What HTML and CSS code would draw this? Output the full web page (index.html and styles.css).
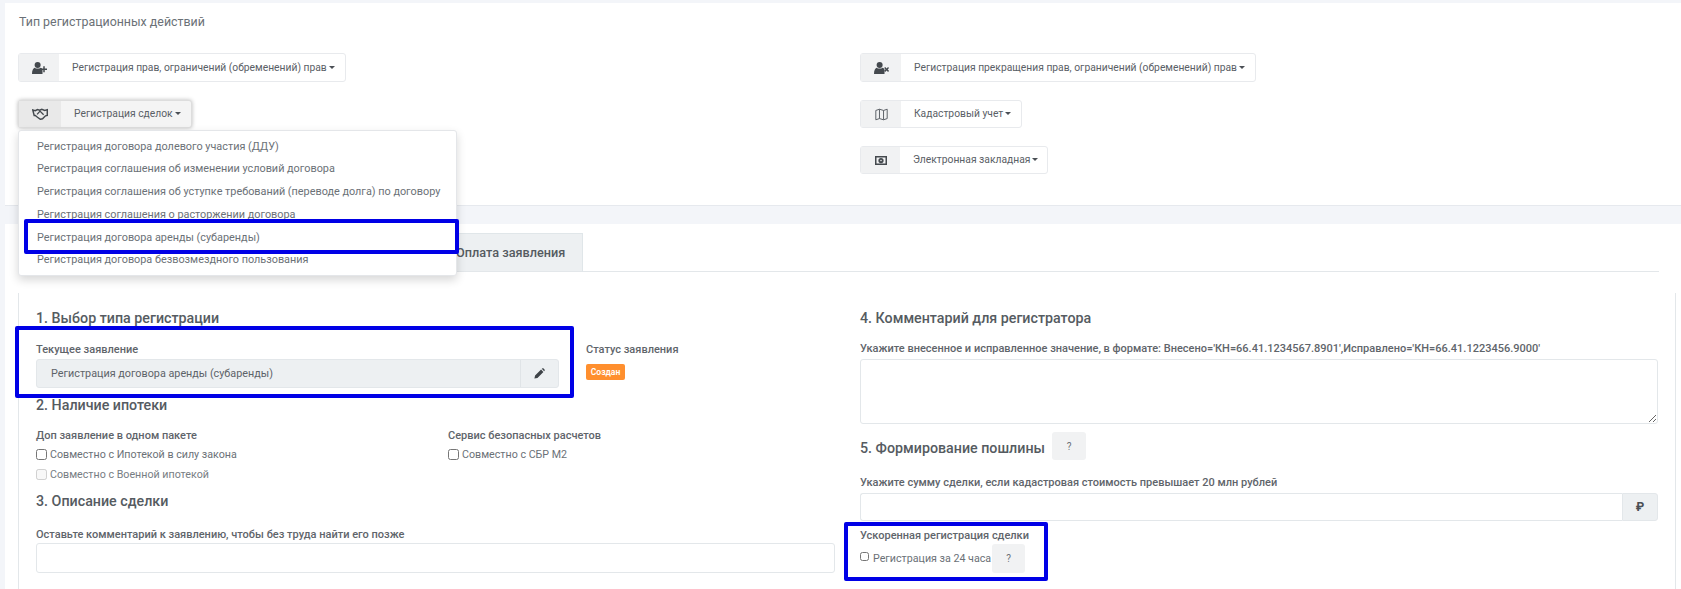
FILE: index.html
```html
<!DOCTYPE html>
<html lang="ru">
<head>
<meta charset="utf-8">
<title>Тип регистрационных действий</title>
<link rel="stylesheet" href="styles.css">
</head>
<body>
<section class="card card-top">
  <h2 class="card-title">Тип регистрационных действий</h2>
  <div class="actions">
    <div class="action-col">
      <div class="split w-rights">
        <span class="split-icon"><svg viewBox="0 0 20 16" class="ico"><circle cx="7.500" cy="4" r="4"/><path d="M0 16c0-5 1.500-8 3.500-8.500 1.500 1.500 6.500 1.500 8 0 1 .2 2 1 2.500 2.500v6z"/><path d="M15 5.500h2v3h3v2h-3v3h-2v-3h-3v-2h3z"/></svg></span>
        <span class="split-label">Регистрация прав, ограничений (обременений) прав<i class="caret"></i></span>
      </div>
      <div class="menu-wrap">
        <div class="split split-open w-deals">
          <span class="split-icon"><svg viewBox="0 0 22 16" class="ico ico-wide"><path d="M1 2.500l3.500 1 3-1.500 3 .8 3-1.300 4 1.500 3.500-1v8l-2.500.5-4 4-3 .8-4-2.800-3-2.500-1.500 0z" fill="none" stroke="#44494e" stroke-width="2"/><path d="M7 8.500l4-4.500 5 5" fill="none" stroke="#44494e" stroke-width="1.800"/></svg></span>
          <span class="split-label">Регистрация сделок<i class="caret"></i></span>
        </div>
        <ul class="menu">
          <li>Регистрация договора долевого участия (ДДУ)</li>
          <li>Регистрация соглашения об изменении условий договора</li>
          <li>Регистрация соглашения об уступке требований (переводе долга) по договору</li>
          <li>Регистрация соглашения о расторжении договора</li>
          <li>Регистрация договора аренды (субаренды)</li>
          <li>Регистрация договора безвозмездного пользования</li>
          <li class="mark mark-menu" aria-hidden="true"></li>
        </ul>
      </div>
    </div>
    <div class="action-col">
      <div class="split w-stop">
        <span class="split-icon"><svg viewBox="0 0 20 16" class="ico"><circle cx="7.500" cy="4" r="4"/><path d="M0 16c0-5 1.500-8 3.500-8.500 1.500 1.500 6.500 1.500 8 0 1 .2 2 1 2.500 2.500v6z"/><path d="M13.500 8l1.400-1.400 1.900 1.900 1.900-1.900L20.100 8l-1.900 1.900 1.900 1.900-1.400 1.400-1.900-1.900-1.900 1.900-1.400-1.400 1.900-1.900z"/></svg></span>
        <span class="split-label">Регистрация прекращения прав, ограничений (обременений) прав<i class="caret"></i></span>
      </div>
      <div class="split split-short w-cad">
        <span class="split-icon"><svg viewBox="0 0 16 15" class="ico ico-line"><path d="M1 2.500l4.500-1.500 5 1.500L15 1v11.500L10.500 14l-5-1.500L1 14zM5.500 1v11.500M10.500 2.500V14"/></svg></span>
        <span class="split-label">Кадастровый учет<i class="caret"></i></span>
      </div>
      <div class="split split-short split-narrow w-mort">
        <span class="split-icon"><svg viewBox="0 0 16 12" class="ico ico-money"><path fill-rule="evenodd" d="M0 0h16v12H0zM2 2v8h12V2z"/><path fill-rule="evenodd" d="M8 2.500a3.500 3.500 0 1 0 0 7 3.500 3.500 0 1 0 0-7zM8 5a1 1 0 1 1 0 2 1 1 0 1 1 0-2z"/></svg></span>
        <span class="split-label">Электронная закладная<i class="caret"></i></span>
      </div>
    </div>
  </div>
</section>

<section class="card card-main">
  <div class="tabs"><span class="tab">Оплата заявления</span></div>
  <div class="panel">
    <div class="col">
      <h3 class="h-sec">1. Выбор типа регистрации</h3>
      <div class="current-row">
        <div class="current">
          <div class="lbl">Текущее заявление</div>
          <div class="current-field">
            <span class="current-text">Регистрация договора аренды (субаренды)</span>
            <span class="current-btn"><svg viewBox="0 0 14 14" class="pencil"><path d="M0.500 13.500l.9-3.900L9 2l3 3-7.600 7.600zM9.900 1.100l.5-.5c.6-.5 1.300-.5 1.800 0l1.200 1.200c.5.500.5 1.200 0 1.800l-.5.5z"/></svg></span>
          </div>
          <div class="mark mark-current" aria-hidden="true"></div>
        </div>
        <div class="status">
          <div class="lbl">Статус заявления</div>
          <span class="badge">Создан</span>
        </div>
      </div>
      <h3 class="h-sec h-two">2. Наличие ипотеки</h3>
      <div class="mort-grid">
        <div>
          <div class="lbl">Доп заявление в одном пакете</div>
          <label class="chk"><input type="checkbox">Совместно с Ипотекой в силу закона</label>
          <label class="chk chk-off"><input type="checkbox" disabled>Совместно с Военной ипотекой</label>
        </div>
        <div>
          <div class="lbl">Сервис безопасных расчетов</div>
          <label class="chk"><input type="checkbox">Совместно с СБР М2</label>
        </div>
      </div>
      <h3 class="h-sec h-three">3. Описание сделки</h3>
      <div class="lbl lbl-desc">Оставьте комментарий к заявлению, чтобы без труда найти его позже</div>
      <input class="field field-desc" type="text">
    </div>
    <div class="col">
      <h3 class="h-sec">4. Комментарий для регистратора</h3>
      <div class="lbl lbl-note">Укажите внесенное и исправленное значение, в формате: Внесено='КН=66.41.1234567.8901',Исправлено='КН=66.41.1223456.9000'</div>
      <textarea class="field field-area"></textarea>
      <div class="fee-head">
        <h3 class="h-sec h-fee">5. Формирование пошлины</h3>
        <span class="help help-lg">?</span>
      </div>
      <div class="lbl lbl-sum">Укажите сумму сделки, если кадастровая стоимость превышает 20 млн рублей</div>
      <div class="sum-row">
        <input class="sum-input" type="text">
        <span class="sum-addon">₽</span>
      </div>
      <div class="fast">
        <div class="lbl">Ускоренная регистрация сделки</div>
        <div class="fast-row">
          <label class="chk chk-fast"><input type="checkbox">Регистрация за 24 часа</label>
          <span class="help help-sm">?</span>
        </div>
        <div class="mark mark-fast" aria-hidden="true"></div>
      </div>
    </div>
  </div>
</section>
</body>
</html>
```
FILE: styles.css
```css
* { box-sizing: border-box; }
html, body { margin: 0; height: 589px; overflow: hidden; }
body {
  background: #f3f5f9;
  font-family: Roboto, "Noto Sans", sans-serif;
  font-size: 11.5px;
  color: #5d6369;
  padding: 3px 0 0 5px;
}
.card { background: #fff; }
.card-top {
  height: 203px;
  padding: 9px 0 0 13px;
  border-bottom: 1px solid #e6e9ee;
}
.card-title { margin: 0 0 0 1px; font-size: 12.4px; line-height: 20px; font-weight: 400; color: #6b7177; }
.actions { display: grid; grid-template-columns: 842px 1fr; margin-top: 21px; }
.action-col { display: flex; flex-direction: column; align-items: flex-start; gap: 18px; }
.split {
  display: flex;
  height: 29px;
  border: 1px solid #e8eaed;
  border-radius: 3px;
  background: #fff;
}
.split-short { height: 28px; }
.split-icon {
  flex: none;
  width: 40px;
  background: #f1f2f3;
  display: flex;
  align-items: center;
  justify-content: center;
}
.split-narrow .split-icon { width: 39px; }
.split-label {
  flex: 1;
  padding-left: 13px;
  line-height: 27px;
  font-size: 10.3px;
  color: #5a6066;
  white-space: nowrap;
}
.split-short .split-label { line-height: 26px; }
.w-rights { width: 328px; }
.w-deals { width: 174px; }
.w-stop { width: 396px; }
.w-cad { width: 162px; }
.w-mort { width: 188px; }
.split-open { box-shadow: 0 0 4px rgba(0,0,0,.28); height: 28px; background: #f4f4f4; border-color: #ddd; }
.split-open .split-icon { background: #e9e9e9; width: 42px; }
.split-open .split-label { line-height: 26px; }
.caret {
  display: inline-block;
  margin-left: 2px;
  vertical-align: 2px;
  border-top: 3px solid #4a4f55;
  border-left: 3px solid transparent;
  border-right: 3px solid transparent;
}
.ico { width: 15px; height: 12px; fill: #44494e; }
.ico-wide { width: 16px; height: 12px; }
.ico-line { fill: none; stroke: #5a6066; stroke-width: 1.200; width: 13px; height: 13px; }
.ico-money { width: 12px; height: 9px; }
.menu-wrap { position: relative; }
.menu {
  position: absolute;
  z-index: 5;
  top: 30px;
  left: 0;
  width: 439px;
  height: 146px;
  margin: 0;
  padding: 4.5px 0 0;
  list-style: none;
  background: #fff;
  border: 1px solid #e4e6e9;
  border-radius: 3px;
  box-shadow: 0 4px 10px rgba(0,0,0,.16);
}
.menu li { padding-left: 18px; line-height: 22.8px; font-size: 10.85px; color: #6b7177; white-space: nowrap; }
.menu .mark-menu { padding: 0; }
.mark { position: absolute; border: 4px solid #0000e6; border-radius: 2px; pointer-events: none; }
.mark-menu { left: 5px; top: 88px; width: 435px; height: 35px; }
.card-main { margin-top: 18px; height: 365px; padding: 9px 0 0 13px; position: relative; }
.tabs { display: flex; width: 1641px; height: 39px; border-bottom: 1px solid #e3e7ea; padding-left: 422px; }
.tab {
  height: 39px;
  width: 143px;
  padding-left: 15px;
  background: #edf0f2;
  border: 1px solid #e0e6e9;
  border-bottom: 1px solid #e3e7ea;
  line-height: 37px;
  font-size: 12.7px;
  font-weight: 500;
  color: #555b61;
  white-space: nowrap;
}
.panel {
  display: grid;
  grid-template-columns: 799px 798px;
  column-gap: 25px;
  width: 1658px;
  height: 296px;
  margin-top: 21px;
  padding: 15px 0 0 17px;
  border-left: 1px solid #e3e7ea;
  border-right: 1px solid #e3e7ea;
}
.col { min-width: 0; }
.h-sec { margin: 0; font-size: 14.25px; line-height: 20px; font-weight: 500; color: #555b61; }
.lbl { font-size: 11px; line-height: 14px; font-weight: 500; color: #5f656b; white-space: nowrap; }
.current-row { display: flex; margin-top: 15px; }
.current { position: relative; width: 523px; }
.current-field {
  display: flex;
  height: 29px;
  margin-top: 2px;
  background: #edf0f2;
  border: 1px solid #e3e7ea;
  border-radius: 3px;
}
.current-text { flex: 1; padding-left: 14px; line-height: 28px; font-size: 10.8px; color: #5d6369; }
.current-btn {
  flex: none;
  width: 38px;
  border-left: 1px solid #e0e4e7;
  display: flex;
  align-items: center;
  justify-content: center;
}
.pencil { width: 11px; height: 11px; fill: #3e4348; }
.mark-current { left: -21px; top: -17px; width: 559px; height: 72px; }
.status { margin-left: 27px; }
.badge {
  display: block;
  width: 39px;
  height: 16px;
  margin-top: 7px;
  background: #ff8f2e;
  border-radius: 2px;
  color: #fff;
  font-size: 8.5px;
  font-weight: 600;
  line-height: 16px;
  text-align: center;
}
.h-two { margin-top: 7px; }
.mort-grid { display: grid; grid-template-columns: 412px 1fr; margin-top: 14px; }
.chk { display: flex; align-items: center; font-size: 10.7px; line-height: 20px; color: #6b7177; white-space: nowrap; }
.chk input { width: 11px; height: 11px; margin: -2px 3px 0 0; flex: none; }
.mort-grid .lbl { margin-bottom: 2px; }
.chk-off { color: #777d83; }
.h-three { margin-top: 6px; }
.lbl-desc { margin-top: 17px; }
.field { display: block; width: 100%; background: #fff; border: 1px solid #e3e7ea; border-radius: 3px; outline: none; }
.field-desc { height: 30px; margin-top: 1px; }
.lbl-note { margin-top: 14px; }
.field-area { height: 65px; margin-top: 3px; resize: vertical; }
.fee-head { display: flex; align-items: center; margin-top: 8px; }
.h-fee { margin-top: 4px; }
.help { display: flex; align-items: center; justify-content: center; background: #f1f2f3; border-radius: 3px; font-size: 10px; color: #6b7177; }
.help-lg { width: 34px; height: 28px; margin-left: 7px; }
.help-sm { width: 33px; height: 29px; margin-left: 1px; }
.lbl-sum { margin-top: 16px; }
.sum-row { display: flex; height: 28px; margin-top: 3px; }
.sum-input { flex: 1; min-width: 0; height: 28px; border: 1px solid #e3e7ea; border-right: 0; border-radius: 3px 0 0 3px; outline: none; }
.sum-addon {
  flex: none;
  width: 36px;
  background: #edf0f2;
  border: 1px solid #e3e7ea;
  border-radius: 0 3px 3px 0;
  text-align: center;
  line-height: 26px;
  font-weight: 700;
  font-size: 12px;
  color: #4a4f55;
}
.fast { position: relative; margin-top: 8px; }
.fast-row { display: flex; align-items: center; margin-top: 1px; }
.chk-fast input { width: 9px; height: 9px; margin: -4px 4px 0 0; }
.mark-fast { left: -16px; top: -7px; width: 204px; height: 59px; }
```
